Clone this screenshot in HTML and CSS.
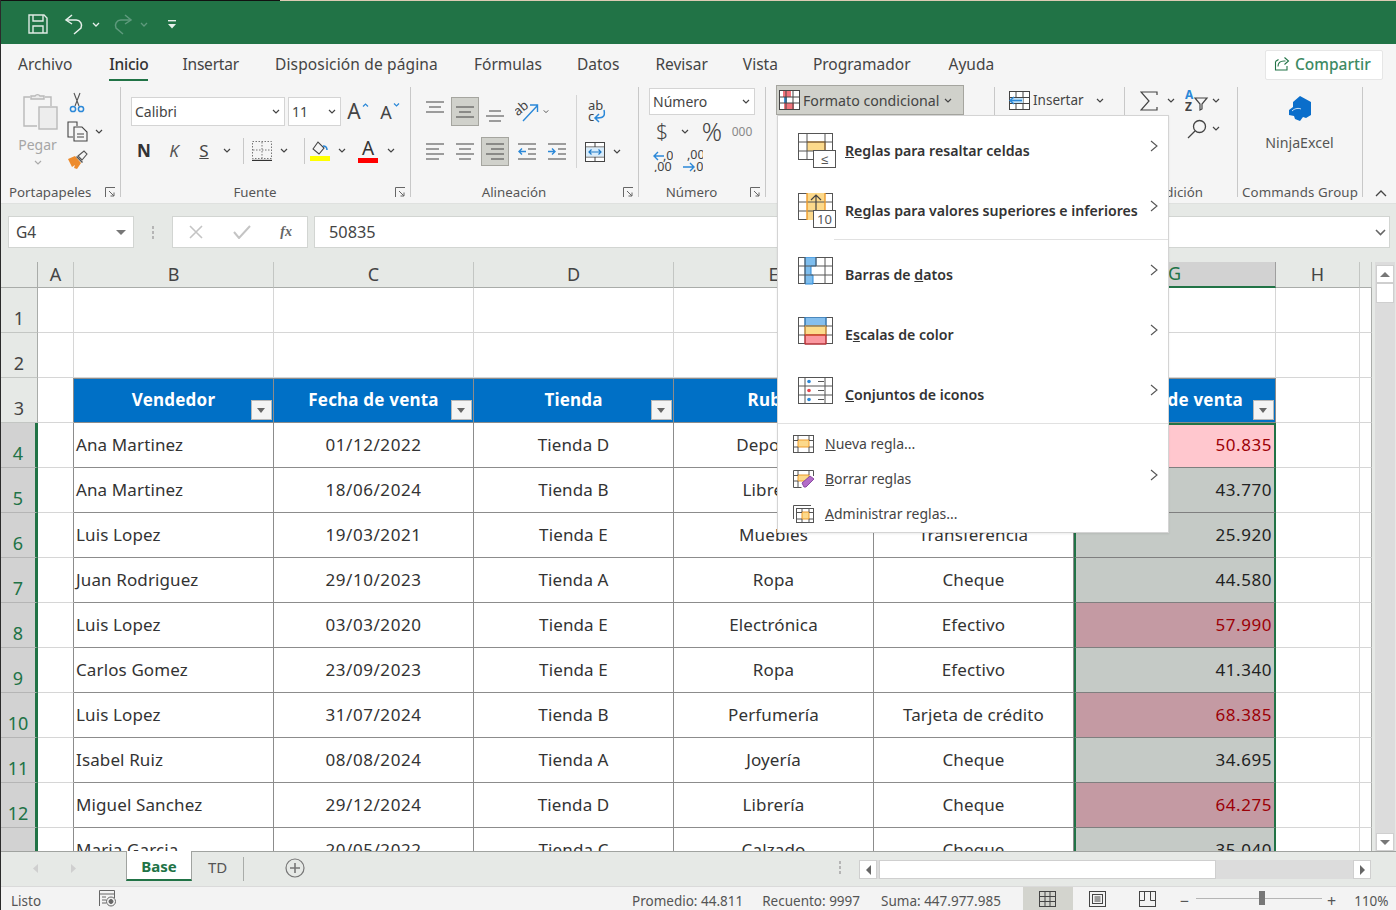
FILE: index.html
```html
<!DOCTYPE html>
<html lang="es">
<head>
<meta charset="utf-8">
<title>Excel</title>
<link rel="stylesheet" href="styles.css">
</head>
<body>
<div class="app">
  <div class="topline"></div>
  <header class="titlebar">
    <svg class="q-save" width="22" height="22" viewBox="0 0 22 22" fill="none" stroke="#dfeae4" stroke-width="1.4"><path d="M2 2h15l3 3v15H2z"/><path d="M6 2v6h10V2"/><path d="M6 20v-7h10v7"/></svg>
    <svg class="q-undo" width="22" height="22" viewBox="0 0 22 22" fill="none" stroke="#e8f0ec" stroke-width="1.5"><path d="M8 2L2 7l6 4"/><path d="M2 7h10a5.5 5.5 0 0 1 5 8l-7 6"/></svg>
    <svg class="q-caret" width="8" height="5" viewBox="0 0 8 5" fill="none" stroke="#e8f0ec" stroke-width="1.3"><path d="M1 1l3 3 3-3"/></svg>
    <svg class="q-redo" width="22" height="22" viewBox="0 0 22 22" fill="none" stroke="#5f9a7d" stroke-width="1.5"><path d="M14 2l6 5-6 4"/><path d="M20 7H10a5.5 5.5 0 0 0-5 8l7 6"/></svg>
    <svg class="q-caret q-dim" width="8" height="5" viewBox="0 0 8 5" fill="none" stroke="#5f9a7d" stroke-width="1.3"><path d="M1 1l3 3 3-3"/></svg>
    <svg class="q-more" width="10" height="9" viewBox="0 0 10 9" fill="#e8f0ec"><rect x="1" y="0" width="8" height="1.4"/><path d="M1 4h8L5 8.5z"/></svg>
  </header>

  <nav class="tabs">
    <span class="tab">Archivo</span>
    <span class="tab tab-on">Inicio</span>
    <span class="tab">Insertar</span>
    <span class="tab">Disposición de página</span>
    <span class="tab">Fórmulas</span>
    <span class="tab">Datos</span>
    <span class="tab">Revisar</span>
    <span class="tab">Vista</span>
    <span class="tab">Programador</span>
    <span class="tab">Ayuda</span>
    <button class="share">
      <svg width="16" height="15" viewBox="0 0 16 15" fill="none" stroke="#217346" stroke-width="1.1"><path d="M1.5 5.5v8.5h11.5v-4"/><path d="M4 10.5c0-4 3-5.5 6-5.5h1.5"/><path d="M10.5 1.5l4 3.5-4 3.5"/><path d="M1.5 5.5l3-2"/></svg>
      <span>Compartir</span>
    </button>
  </nav>

  <section class="ribbon">
    <div class="group g-clip">
      <div class="body clip">
        <div class="paste">
          <svg width="36" height="40" viewBox="0 0 36 40" fill="none" stroke="#b9b9b9" stroke-width="1.4"><path d="M7 5H1v29h13"/><path d="M22 5h6v9"/><path d="M8 7V4h4a3 3 0 0 1 5 0h4v3z" fill="#ececec"/><rect x="16" y="15" width="18" height="22" fill="#ededed"/></svg>
          <span class="pegar">Pegar</span>
          <svg class="caret-dim" width="8" height="5" viewBox="0 0 8 5" fill="none" stroke="#aaa" stroke-width="1.2"><path d="M1 1l3 3 3-3"/></svg>
        </div>
        <div class="clip-tools">
          <svg width="16" height="21" viewBox="0 0 16 21" fill="none"><path d="M5 1l5 13M11 1L6 14" stroke="#555" stroke-width="1.1"/><circle cx="4" cy="17" r="2.6" stroke="#2b88d8" stroke-width="1.5"/><circle cx="12" cy="17" r="2.6" stroke="#2b88d8" stroke-width="1.5"/></svg>
          <div class="row-c">
            <svg width="22" height="21" viewBox="0 0 22 21" fill="none" stroke="#444" stroke-width="1.1"><path d="M7 1H1v15h5"/><path d="M7 1h3v4"/><path d="M7 6h8l5 5v9H7z" fill="#f5f5f5"/><path d="M10 13h7M10 16h7"/></svg>
            <svg class="cr" width="8" height="5" viewBox="0 0 8 5" fill="none" stroke="#444" stroke-width="1.2"><path d="M1 1l3 3 3-3"/></svg>
          </div>
          <svg width="21" height="20" viewBox="0 0 21 20"><path d="M1 9l7-3 6 7-4 6-3-1 1-3-3 2z" fill="#ed8b2c"/><path d="M9 7l6 6 1-1-6-6z" fill="#555"/><path d="M11 6l6-5 3 3-5 6z" fill="none" stroke="#555" stroke-width="1.1"/></svg>
        </div>
      </div>
      <div class="label lab-clip"><span>Portapapeles</span><svg class="launch" width="11" height="11" viewBox="0 0 11 11" fill="none" stroke="#666"><path d="M.5 10V.5H10"/><path d="M4 4l5 5M9 5.5V9H5.5"/></svg></div>
    </div>

    <div class="group g-font">
      <div class="body font">
        <div class="row">
          <div class="combo w-font"><span>Calibri</span><svg width="8" height="5" viewBox="0 0 8 5" fill="none" stroke="#444" stroke-width="1.2"><path d="M1 1l3 3 3-3"/></svg></div>
          <div class="combo w-size"><span>11</span><svg width="8" height="5" viewBox="0 0 8 5" fill="none" stroke="#444" stroke-width="1.2"><path d="M1 1l3 3 3-3"/></svg></div>
          <div class="ic w34 grow-a"><span class="bigA">A</span><svg class="sup" width="7" height="4" viewBox="0 0 7 4" fill="none" stroke="#2b88d8" stroke-width="1.2"><path d="M1 3.5l2.5-2.5 2.5 2.5"/></svg></div>
          <div class="ic w30 grow-a"><span class="smA">A</span><svg class="sup" width="7" height="4" viewBox="0 0 7 4" fill="none" stroke="#2b88d8" stroke-width="1.2"><path d="M1 .5l2.5 2.5 2.5-2.5"/></svg></div>
        </div>
        <div class="row r2">
          <div class="ic w30 fmt fmt-b">N</div>
          <div class="ic w30 fmt fmt-i">K</div>
          <div class="ic w30 fmt fmt-u">S</div>
          <div class="ic w16"><svg width="8" height="5" viewBox="0 0 8 5" fill="none" stroke="#444" stroke-width="1.2"><path d="M1 1l3 3 3-3"/></svg></div>
          <i class="vsep"></i>
          <div class="ic w20"><svg width="20" height="20" viewBox="0 0 20 20" fill="none" stroke="#777" stroke-dasharray="1.5 1.5"><rect x=".5" y=".5" width="19" height="17"/><path d="M10 1v16M1 9h18"/><path d="M0 19.5h20" stroke="#333" stroke-width="1.4" stroke-dasharray="none"/></svg></div>
          <div class="ic w24"><svg width="8" height="5" viewBox="0 0 8 5" fill="none" stroke="#444" stroke-width="1.2"><path d="M1 1l3 3 3-3"/></svg></div>
          <i class="vsep vsep2"></i>
          <div class="ic w22"><svg width="20" height="21" viewBox="0 0 20 21" fill="none"><path d="M3 9l5-7 6 6-5 6z" stroke="#444" stroke-width="1.1"/><path d="M13 6c3 0 4 2 4 4" stroke="#2b88d8" stroke-width="1.6"/><rect y="16" width="20" height="5" fill="#ffff00"/></svg></div>
          <div class="ic w22"><svg width="8" height="5" viewBox="0 0 8 5" fill="none" stroke="#444" stroke-width="1.2"><path d="M1 1l3 3 3-3"/></svg></div>
          <div class="ic w30 col-a"><span>A</span><i></i></div>
          <div class="ic w16"><svg width="8" height="5" viewBox="0 0 8 5" fill="none" stroke="#444" stroke-width="1.2"><path d="M1 1l3 3 3-3"/></svg></div>
        </div>
      </div>
      <div class="label"><span>Fuente</span><svg class="launch" width="11" height="11" viewBox="0 0 11 11" fill="none" stroke="#666"><path d="M.5 10V.5H10"/><path d="M4 4l5 5M9 5.5V9H5.5"/></svg></div>
    </div>

    <div class="group g-align">
      <div class="body align">
        <div class="align-left">
          <div class="row">
            <div class="ic w26"><svg class="v-top" width="18" height="12" viewBox="0 0 18 12" stroke="#444" stroke-width="1.2"><path d="M0 1h18M3 6h12M0 11h18"/></svg></div>
            <div class="ic w28 on on-a"><svg width="18" height="12" viewBox="0 0 18 12" stroke="#444" stroke-width="1.2"><path d="M0 1h18M3 6h12M0 11h18"/></svg></div>
            <div class="ic w32"><svg class="v-bot" width="18" height="12" viewBox="0 0 18 12" stroke="#444" stroke-width="1.2"><path d="M3 1h12M0 6h18M3 11h12"/></svg></div>
            <div class="ic w32"><svg width="24" height="21" viewBox="0 0 24 21" fill="none"><text x="0" y="12" class="svg-ab" transform="rotate(-40 6 10)">ab</text><path d="M8 20L22 5M15 4h7.500v7" stroke="#2b88d8" stroke-width="1.4"/></svg></div>
            <div class="ic w6"><svg width="8" height="5" viewBox="0 0 8 5" fill="none" stroke="#444" stroke-width="1.2"><path d="M1 1l3 3 3-3"/></svg></div>
          </div>
          <div class="row r2a">
            <div class="ic w26"><svg width="18" height="18" viewBox="0 0 18 18" stroke="#444" stroke-width="1.2"><path d="M0 1h18M0 6h13M0 11h18M0 16h13"/></svg></div>
            <div class="ic w34"><svg width="18" height="18" viewBox="0 0 18 18" stroke="#444" stroke-width="1.2"><path d="M0 1h18M3 6h12M0 11h18M3 16h12"/></svg></div>
            <div class="ic w28 on on-b"><svg width="18" height="18" viewBox="0 0 18 18" stroke="#444" stroke-width="1.2"><path d="M0 1h18M5 6h13M0 11h18M5 16h13"/></svg></div>
            <div class="ic w36"><svg width="18" height="18" viewBox="0 0 18 18" fill="none" stroke="#444" stroke-width="1.2"><path d="M0 1h18M10 6h8M10 11h8M0 16h18"/><path d="M8 8.500H1M4 5.500l-3 3 3 3" stroke="#2b88d8" stroke-width="1.4"/></svg></div>
            <div class="ic w24"><svg width="18" height="18" viewBox="0 0 18 18" fill="none" stroke="#444" stroke-width="1.2"><path d="M0 1h18M10 6h8M10 11h8M0 16h18"/><path d="M0 8.500h7M4 5.500l3 3-3 3" stroke="#2b88d8" stroke-width="1.4"/></svg></div>
          </div>
        </div>
        <div class="align-right">
          <div class="wrap"><svg width="20" height="24" viewBox="0 0 20 24" fill="none"><text x="1" y="10" class="svg-ab2">ab</text><text x="1" y="21" class="svg-ab2">c</text><path d="M17 10c2 8-3 8-9 8M12 14l-4 4 4 4" stroke="#2b88d8" stroke-width="1.5"/></svg></div>
          <div class="row merge">
            <div class="ic w36"><svg width="20" height="20" viewBox="0 0 20 20" fill="#cfe6f8" stroke="#444"><rect x=".5" y=".5" width="19" height="19" fill="#fff"/><path d="M0 5h20M0 15h20M10 1v4M10 15v4"/><path d="M1 5.500h18v9H1z" fill="#d8ecfb" stroke="none"/><path d="M4 10h12M6.500 7.500L4 10l2.500 2.500M13.500 7.500L16 10l-2.500 2.500" fill="none" stroke="#1e7ac8" stroke-width="1.2"/></svg></div>
            <div class="ic w8"><svg width="8" height="5" viewBox="0 0 8 5" fill="none" stroke="#444" stroke-width="1.2"><path d="M1 1l3 3 3-3"/></svg></div>
          </div>
        </div>
      </div>
      <div class="label"><span>Alineación</span><svg class="launch" width="11" height="11" viewBox="0 0 11 11" fill="none" stroke="#666"><path d="M.5 10V.5H10"/><path d="M4 4l5 5M9 5.5V9H5.5"/></svg></div>
    </div>

    <div class="group g-num">
      <div class="body num">
        <div class="combo w-num"><span>Número</span><svg width="8" height="5" viewBox="0 0 8 5" fill="none" stroke="#444" stroke-width="1.2"><path d="M1 1l3 3 3-3"/></svg></div>
        <div class="row r-num">
          <div class="ic w26 dollar">$</div>
          <div class="ic w20"><svg width="8" height="5" viewBox="0 0 8 5" fill="none" stroke="#444" stroke-width="1.2"><path d="M1 1l3 3 3-3"/></svg></div>
          <div class="ic w34 pct">%</div>
          <div class="ic w26 thou">000</div>
        </div>
        <div class="row r-dec">
          <svg width="20" height="22" viewBox="0 0 20 22" fill="none"><path d="M1 6h10M5 2L1 6l4 4" stroke="#2b88d8" stroke-width="1.4"/><text x="10" y="10" class="svg-dec">,0</text><text x="1" y="21" class="svg-dec">,00</text></svg>
          <svg width="20" height="22" viewBox="0 0 20 22" fill="none"><text x="4" y="9" class="svg-dec">,00</text><path d="M0 17h10M7 13l4 4-4 4" stroke="#2b88d8" stroke-width="1.4"/><text x="10" y="21" class="svg-dec">,0</text></svg>
        </div>
      </div>
      <div class="label"><span>Número</span><svg class="launch" width="11" height="11" viewBox="0 0 11 11" fill="none" stroke="#666"><path d="M.5 10V.5H10"/><path d="M4 4l5 5M9 5.5V9H5.5"/></svg></div>
    </div>

    <div class="group g-style">
      <div class="body style">
        <button class="cf-btn">
          <svg width="21" height="20" viewBox="0 0 21 20"><rect x=".5" y=".5" width="20" height="19" fill="#fff" stroke="#444"/><rect x="4" y="1" width="8" height="6" fill="#f2737b"/><rect x="5" y="7" width="3" height="6" fill="#3a96dd"/><rect x="5" y="13" width="10" height="6" fill="#f2737b"/><path d="M0 7h21M0 13h21M7 0v20M14 0v20" stroke="#444" fill="none"/></svg>
          <span>Formato condicional</span>
          <svg width="8" height="5" viewBox="0 0 8 5" fill="none" stroke="#444" stroke-width="1.2"><path d="M1 1l3 3 3-3"/></svg>
        </button>
      </div>
      <div class="label"><span>Estilos</span></div>
    </div>

    <div class="group g-cells">
      <div class="body cells">
        <svg width="21" height="19" viewBox="0 0 21 19" fill="none"><rect x=".5" y=".5" width="20" height="18" fill="#fff" stroke="#444"/><path d="M0 6.500h21M0 12.500h21M7 0v19M14 0v19" stroke="#444"/><rect x="1" y="7" width="13" height="5" fill="#bfe0f7"/><path d="M1 9.500h12M5 6L1 9.500 5 13" stroke="#2b88d8" stroke-width="1.5"/></svg>
        <span class="ins">Insertar</span>
        <svg class="ins-c" width="8" height="5" viewBox="0 0 8 5" fill="none" stroke="#444" stroke-width="1.2"><path d="M1 1l3 3 3-3"/></svg>
      </div>
      <div class="label"><span>Celdas</span></div>
    </div>

    <div class="group g-edit">
      <div class="body edit">
        <div class="row">
          <div class="ic w20 sigma"><svg width="18" height="20" viewBox="0 0 18 20" fill="none" stroke="#444" stroke-width="1.2"><path d="M17 4V1H1l8 9-8 9h16v-3"/></svg></div>
          <div class="ic w24"><svg width="8" height="5" viewBox="0 0 8 5" fill="none" stroke="#444" stroke-width="1.2"><path d="M1 1l3 3 3-3"/></svg></div>
          <div class="ic w24 sort"><svg width="24" height="22" viewBox="0 0 24 22" fill="none"><text x="0" y="9" class="svg-az a">A</text><text x="0" y="21" class="svg-az">Z</text><path d="M10 8h12l-5 6v5l-2 1v-6z" stroke="#444" stroke-width="1.2"/></svg></div>
          <div class="ic w14"><svg width="8" height="5" viewBox="0 0 8 5" fill="none" stroke="#444" stroke-width="1.2"><path d="M1 1l3 3 3-3"/></svg></div>
        </div>
        <div class="row r-find">
          <div class="ic w28 hid-c"><svg width="8" height="5" viewBox="0 0 8 5" fill="none" stroke="#444" stroke-width="1.2"><path d="M1 1l3 3 3-3"/></svg></div>
          <div class="ic w24"><svg width="20" height="20" viewBox="0 0 20 20" fill="none" stroke="#444" stroke-width="1.3"><circle cx="12.500" cy="7.500" r="6"/><path d="M8 12L1 19"/></svg></div>
          <div class="ic w14"><svg width="8" height="5" viewBox="0 0 8 5" fill="none" stroke="#444" stroke-width="1.2"><path d="M1 1l3 3 3-3"/></svg></div>
        </div>
        <div class="row r-third">
          <div class="ic w28 hid-c"><svg width="8" height="5" viewBox="0 0 8 5" fill="none" stroke="#444" stroke-width="1.2"><path d="M1 1l3 3 3-3"/></svg></div>
        </div>
      </div>
      <div class="label lab-edit"><span>Edición</span></div>
    </div>

    <div class="group g-cmd">
      <div class="body cmd">
        <svg width="24" height="26" viewBox="0 0 24 26"><path d="M12 0l11 6v13l-5 3-3-1-3 4-5-2-1-3-5-1V14l4-3V6z" fill="#0a6ecb"/><path d="M4 15c3-3 7-3 9-2" fill="none" stroke="#fff" stroke-width=".8"/></svg>
        <span class="ninja">NinjaExcel</span>
      </div>
      <div class="label"><span>Commands Group</span></div>
    </div>
    <svg class="collapse" width="12" height="7" viewBox="0 0 12 7" fill="none" stroke="#444" stroke-width="1.3"><path d="M1 6l5-5 5 5"/></svg>
  </section>

  <section class="fbar">
    <div class="namebox"><span>G4</span><svg width="10" height="5" viewBox="0 0 10 5" fill="#777"><path d="M0 0h10L5 5z"/></svg></div>
    <div class="grip"><i></i><i></i><i></i></div>
    <div class="fbtns">
      <svg width="14" height="14" viewBox="0 0 14 14" stroke="#c4c4c4" stroke-width="1.6"><path d="M1 1l12 12M13 1L1 13"/></svg>
      <svg width="18" height="14" viewBox="0 0 18 14" fill="none" stroke="#c4c4c4" stroke-width="2"><path d="M1 7l5 6L17 1"/></svg>
      <span class="fx">fx</span>
    </div>
    <div class="finput"><span>50835</span><svg width="11" height="7" viewBox="0 0 11 7" fill="none" stroke="#666" stroke-width="1.6"><path d="M1 1l4.500 4.500L10 1"/></svg></div>
  </section>

  <section class="workspace">
    <div class="gridwrap">
      <table class="sheet">
        <colgroup><col class="c-r"><col class="c-a"><col class="c-w"><col class="c-w"><col class="c-w"><col class="c-w"><col class="c-w"><col class="c-g"><col class="c-h"><col class="c-i"></colgroup>
        <thead>
          <tr><th class="corner"></th><th>A</th><th>B</th><th>C</th><th>D</th><th>E</th><th>F</th><th class="col-sel">G</th><th>H</th><th></th></tr>
        </thead>
        <tbody>
          <tr><th class="rh">1</th><td></td><td></td><td></td><td></td><td></td><td></td><td></td><td></td><td></td></tr>
          <tr><th class="rh">2</th><td></td><td></td><td></td><td></td><td></td><td></td><td></td><td></td><td></td></tr>
          <tr class="thead"><th class="rh">3</th><td class="pre"></td>
            <td class="h">Vendedor<i class="filter"></i></td>
            <td class="h">Fecha de venta<i class="filter"></i></td>
            <td class="h">Tienda<i class="filter"></i></td>
            <td class="h">Rubro<i class="filter"></i></td>
            <td class="h">Forma de pago<i class="filter"></i></td>
            <td class="h">Monto de venta<i class="filter"></i></td>
            <td></td><td></td></tr>
          <tr><th class="rh s">4</th><td class="pre"></td><td class="t l">Ana Martinez</td><td class="t d">01/12/2022</td><td class="t">Tienda D</td><td class="t">Deportes</td><td class="t">Efectivo</td><td class="g active">50.835</td><td></td><td></td></tr>
          <tr><th class="rh s">5</th><td class="pre"></td><td class="t l">Ana Martinez</td><td class="t d">18/06/2024</td><td class="t">Tienda B</td><td class="t">Librería</td><td class="t">Cheque</td><td class="g">43.770</td><td></td><td></td></tr>
          <tr><th class="rh s">6</th><td class="pre"></td><td class="t l">Luis Lopez</td><td class="t d">19/03/2021</td><td class="t">Tienda E</td><td class="t">Muebles</td><td class="t">Transferencia</td><td class="g">25.920</td><td></td><td></td></tr>
          <tr><th class="rh s">7</th><td class="pre"></td><td class="t l">Juan Rodriguez</td><td class="t d">29/10/2023</td><td class="t">Tienda A</td><td class="t">Ropa</td><td class="t">Cheque</td><td class="g">44.580</td><td></td><td></td></tr>
          <tr><th class="rh s">8</th><td class="pre"></td><td class="t l">Luis Lopez</td><td class="t d">03/03/2020</td><td class="t">Tienda E</td><td class="t">Electrónica</td><td class="t">Efectivo</td><td class="g hot">57.990</td><td></td><td></td></tr>
          <tr><th class="rh s">9</th><td class="pre"></td><td class="t l">Carlos Gomez</td><td class="t d">23/09/2023</td><td class="t">Tienda E</td><td class="t">Ropa</td><td class="t">Efectivo</td><td class="g">41.340</td><td></td><td></td></tr>
          <tr><th class="rh s">10</th><td class="pre"></td><td class="t l">Luis Lopez</td><td class="t d">31/07/2024</td><td class="t">Tienda B</td><td class="t">Perfumería</td><td class="t">Tarjeta de crédito</td><td class="g hot">68.385</td><td></td><td></td></tr>
          <tr><th class="rh s">11</th><td class="pre"></td><td class="t l">Isabel Ruiz</td><td class="t d">08/08/2024</td><td class="t">Tienda A</td><td class="t">Joyería</td><td class="t">Cheque</td><td class="g">34.695</td><td></td><td></td></tr>
          <tr><th class="rh s">12</th><td class="pre"></td><td class="t l">Miguel Sanchez</td><td class="t d">29/12/2024</td><td class="t">Tienda D</td><td class="t">Librería</td><td class="t">Cheque</td><td class="g hot">64.275</td><td></td><td></td></tr>
          <tr><th class="rh s">13</th><td class="pre"></td><td class="t l">Maria Garcia</td><td class="t d">20/05/2022</td><td class="t">Tienda C</td><td class="t">Calzado</td><td class="t">Cheque</td><td class="g">35.040</td><td></td><td></td></tr>
        </tbody>
      </table>
    </div>
    <div class="vscroll">
      <div class="sbtn"><svg width="10" height="5" viewBox="0 0 10 5" fill="#777"><path d="M0 5h10L5 0z"/></svg></div>
      <div class="vthumb"></div>
      <div class="sbtn vdown"><svg width="10" height="5" viewBox="0 0 10 5" fill="#777"><path d="M0 0h10L5 5z"/></svg></div>
    </div>
  </section>

  <section class="sheetbar">
    <svg class="nav" width="5" height="9" viewBox="0 0 5 9" fill="#cfcfcf"><path d="M5 0v9L0 4.500z"/></svg>
    <svg class="nav nav2" width="5" height="9" viewBox="0 0 5 9" fill="#cfcfcf"><path d="M0 0v9l5-4.500z"/></svg>
    <div class="stab">Base</div>
    <div class="stab2">TD</div>
    <i class="tsep"></i>
    <svg class="add" width="20" height="20" viewBox="0 0 20 20" fill="none" stroke="#777" stroke-width="1.2"><circle cx="10" cy="10" r="9"/><path d="M10 5v10M5 10h10" stroke-width="1.6"/></svg>
    <div class="grip grip2"><i></i><i></i><i></i></div>
    <div class="hscroll">
      <div class="sbtn hb"><svg width="5" height="10" viewBox="0 0 5 10" fill="#666"><path d="M5 0v10L0 5z"/></svg></div>
      <div class="hthumb"></div>
      <div class="sbtn hb"><svg width="5" height="10" viewBox="0 0 5 10" fill="#666"><path d="M0 0v10l5-5z"/></svg></div>
    </div>
  </section>

  <footer class="status">
    <span class="listo">Listo</span>
    <svg class="macro" width="18" height="17" viewBox="0 0 18 17" fill="none" stroke="#666"><path d="M.5 16V.5h15V8"/><path d="M1 4h14M3 7h4M3 10h4M3 13h4"/><circle cx="12" cy="11.500" r="4.500" fill="#f2f2f2"/><circle cx="12" cy="11.500" r="2" fill="#666"/></svg>
    <span class="stat s1">Promedio: 44.811</span>
    <span class="stat s2">Recuento: 9997</span>
    <span class="stat s3">Suma: 447.977.985</span>
    <div class="view view-on"><svg width="17" height="16" viewBox="0 0 17 16" fill="none" stroke="#444"><rect x=".5" y=".5" width="16" height="15"/><path d="M6 0v16M11 0v16M0 5.500h17M0 10.500h17"/></svg></div>
    <div class="view"><svg width="17" height="16" viewBox="0 0 17 16" fill="none" stroke="#444"><rect x=".5" y=".5" width="16" height="15"/><rect x="3.500" y="3.500" width="10" height="9"/><path d="M5.500 6h6M5.500 8h6M5.500 10h6"/></svg></div>
    <div class="view"><svg width="17" height="16" viewBox="0 0 17 16" fill="none" stroke="#444"><rect x=".5" y=".5" width="16" height="15"/><path d="M.5 9.500h5V.5M11.500.5v9h5"/></svg></div>
    <span class="zm">−</span>
    <div class="slider"><i></i></div>
    <span class="zm zp">+</span>
    <span class="pctz">110%</span>
  </footer>

  <div class="menu">
    <div class="mi big">
      <svg width="38" height="35" viewBox="0 0 38 35" fill="none" stroke="#555"><rect x=".5" y=".5" width="34" height="26" fill="#fff"/><rect x="9" y="9" width="18" height="9" fill="#fcd98b" stroke="none"/><path d="M9 9h18v9" stroke="#ed9b2c" stroke-width="1.4"/><path d="M0 9h35M0 18h35M9 0v27M27 0v27"/><rect x="15.500" y="17.500" width="22" height="17" fill="#fff"/><text x="26.500" y="31" class="svg-mi">≤</text></svg>
      <span class="mt"><u>R</u>eglas para resaltar celdas</span>
      <svg class="chev" width="8" height="12" viewBox="0 0 8 12" fill="none" stroke="#555" stroke-width="1.1"><path d="M1 1l6 5-6 5"/></svg>
    </div>
    <div class="mi big">
      <svg width="38" height="35" viewBox="0 0 38 35" fill="none" stroke="#555"><rect x=".5" y=".5" width="34" height="26" fill="#fff"/><rect x="9" y="0" width="18" height="27" fill="#fcd98b" stroke="none"/><path d="M0 9h35M0 18h35"/><path d="M9 0v27M27 0v27" stroke="#ed9b2c" stroke-width="1.4"/><path d="M18 17V2M13 7l5-5 5 5" stroke="#444" stroke-width="1.2"/><rect x="15.500" y="17.500" width="22" height="17" fill="#fff"/><text x="26.500" y="31" class="svg-mi">10</text></svg>
      <span class="mt">R<u>e</u>glas para valores superiores e inferiores</span>
      <svg class="chev" width="8" height="12" viewBox="0 0 8 12" fill="none" stroke="#555" stroke-width="1.1"><path d="M1 1l6 5-6 5"/></svg>
    </div>
    <div class="msep msep-a"></div>
    <div class="mi big">
      <svg width="38" height="35" viewBox="0 0 38 35" fill="none" stroke="#555"><rect x=".5" y=".5" width="34" height="26" fill="#fff"/><path d="M7 0h11v9h-5v9h2v9H7z" fill="#7dbdee" stroke="#2b88d8"/><path d="M0 9h35M0 18h35M7 0v27M27 0v27"/><path d="M18 0v9" /></svg>
      <span class="mt">Barras de <u>d</u>atos</span>
      <svg class="chev" width="8" height="12" viewBox="0 0 8 12" fill="none" stroke="#555" stroke-width="1.1"><path d="M1 1l6 5-6 5"/></svg>
    </div>
    <div class="mi big">
      <svg width="38" height="35" viewBox="0 0 38 35" fill="none" stroke="#555"><rect x=".5" y=".5" width="34" height="26" fill="#fff"/><rect x="7" y="0" width="21" height="9" fill="#85bfee"/><rect x="7" y="9" width="21" height="9" fill="#fddc8c"/><rect x="7" y="18" width="21" height="9" fill="#fb98a0"/><path d="M7 0h21v9H7z" stroke="#2b88d8"/><path d="M7 9h21v9H7z" stroke="#ed9b2c"/><path d="M7 18h21v9H7z" stroke="#e0242c"/><path d="M0 9h7M28 9h7M0 18h7M28 18h7"/></svg>
      <span class="mt">E<u>s</u>calas de color</span>
      <svg class="chev" width="8" height="12" viewBox="0 0 8 12" fill="none" stroke="#555" stroke-width="1.1"><path d="M1 1l6 5-6 5"/></svg>
    </div>
    <div class="mi big">
      <svg width="38" height="35" viewBox="0 0 38 35" fill="none" stroke="#555"><rect x=".5" y=".5" width="34" height="26" fill="#fff"/><path d="M0 9h35M0 18h35M7 0v27M27 0v27"/><path d="M20 4.500h6M20 13.500h6M20 22.500h6"/><circle cx="11" cy="4.500" r="1.800" fill="#2b88d8" stroke="none"/><circle cx="11" cy="13.500" r="1.800" fill="#e8434a" stroke="none"/><circle cx="11" cy="22.500" r="1.800" fill="#2b88d8" stroke="none"/></svg>
      <span class="mt"><u>C</u>onjuntos de iconos</span>
      <svg class="chev" width="8" height="12" viewBox="0 0 8 12" fill="none" stroke="#555" stroke-width="1.1"><path d="M1 1l6 5-6 5"/></svg>
    </div>
    <div class="msep msep-b"></div>
    <div class="mi small">
      <svg width="21" height="18" viewBox="0 0 21 18" fill="none" stroke="#555"><rect x=".5" y=".5" width="20" height="17" fill="#fff"/><rect x="5" y="5" width="11" height="7" fill="#fcd98b" stroke="#ed9b2c"/><path d="M0 5.500h5M16 5.500h5M0 12h5M16 12h5M5 0v5M16 0v5M5 12v6M16 12v6"/></svg>
      <span class="ms"><u>N</u>ueva regla...</span>
    </div>
    <div class="mi small">
      <svg width="21" height="18" viewBox="0 0 21 18" fill="none" stroke="#555"><path d="M20.500 6V.5H.5v17h8"/><rect x="5" y="5" width="11" height="6" fill="#fcd98b" stroke="#ed9b2c"/><path d="M0 5.500h5M0 11h5M5 0v5M16 0v5M5 11v6"/><path d="M9 13l8-7 4 3-8 8h-2z" fill="#b36cc8" stroke="#8a4ba3"/></svg>
      <span class="ms"><u>B</u>orrar reglas</span>
      <svg class="chev" width="8" height="12" viewBox="0 0 8 12" fill="none" stroke="#555" stroke-width="1.1"><path d="M1 1l6 5-6 5"/></svg>
    </div>
    <div class="mi small">
      <svg width="21" height="18" viewBox="0 0 21 18" fill="none" stroke="#555"><path d="M.5 14V.5H18"/><rect x="3.500" y="3.500" width="17" height="14" fill="#fff"/><rect x="9" y="7" width="7" height="7" fill="#fcd98b" stroke="#ed9b2c"/><path d="M4 7.500h5M16 7.500h5M4 14h5M16 14h5M9 4v3M16 4v3M9 14v4M16 14v4"/></svg>
      <span class="ms"><u>A</u>dministrar reglas...</span>
    </div>
  </div>
</div>
</body>
</html>
```
FILE: styles.css
```css
* { box-sizing: border-box; }
html, body { margin: 0; padding: 0; }
body { width: 1396px; height: 910px; overflow: hidden; font-family: "Noto Sans", "Open Sans", sans-serif; color: #444; background: #fff; }
.app { position: relative; width: 1396px; height: 910px; border-left: 1px solid #2b2b2b; display: flex; flex-direction: column; overflow: hidden; }
i { display: block; }
button { font: inherit; padding: 0; }

.topline { height: 1px; flex: none; background: linear-gradient(to right, #111 279px, #dccbb4 279px); }

.titlebar { height: 43px; flex: none; background: #217346; display: flex; align-items: center; padding: 3px 0 0 26px; }
.q-undo { margin-left: 15px; }
.q-caret { margin-left: 6px; }
.q-redo { margin-left: 11px; }
.q-more { margin-left: 19px; }
.q-dim { margin-left: 7px; }

.tabs { height: 41px; flex: none; background: #f5f5f5; display: flex; align-items: center; padding-left: 17px; gap: 36px; position: relative; font-size: 15.500px; }
.tab { color: #444; line-height: 39px; height: 39px; white-space: nowrap; }
.tab:nth-child(2) { margin-left: 1px; margin-right: -2px; letter-spacing: -.25px; }
.tab:nth-child(3) { margin-right: -1px; letter-spacing: -.2px; }
.tab:nth-child(4) { letter-spacing: .15px; margin-left: 1px; }
.tab:nth-child(5) { margin-right: -1px; }
.tab:nth-child(7) { margin-right: -1px; }
.tab:nth-child(8) { margin-right: -1px; }
.tab:nth-child(9) { margin-right: 2px; }
.tab-on { color: #333; box-shadow: inset 0 -3px 0 #f5f5f5, inset 0 -5px 0 #217346; height: 39px; font-weight: 500; }
.share { margin-left: auto; margin-right: 13px; width: 118px; height: 30px; background: #fff; border: 1px solid #e6e6e6; border-radius: 2px; display: flex; align-items: center; padding: 0 0 2px 8px; gap: 5px; font-size: 15.500px; font-weight: 500; color: #3d8a63; }

.ribbon { height: 119px; flex: none; background: #f5f5f5; display: flex; padding: 2px 0 6px; border-bottom: 1px solid #dfe1df; position: relative; }
.group { display: flex; flex-direction: column; border-right: 1px solid #c8c8c8; flex: none; }
.g-clip { width: 120px; }
.g-font { width: 290px; }
.g-align { width: 228px; }
.g-num { width: 127px; }
.g-style { width: 229px; }
.g-cells { width: 130px; }
.g-edit { width: 113px; }
.g-cmd { width: 125px; }
.body { flex: 1; min-height: 0; }
.label { height: 12px; padding-top: 2px; display: flex; align-items: center; font-size: 13.300px; color: #555; padding-right: 4px; white-space: nowrap; }
.label span { flex: 1; text-align: center; padding-right: 6px; }
.launch { flex: none; }
.lab-clip span { text-align: left; padding-left: 8px; }
.lab-edit span { padding: 0; margin-left: 3px; }
.g-cmd .label { padding-right: 0; }
.g-cmd .label span { padding: 0; letter-spacing: .12px; }

.row { display: flex; align-items: center; height: 29px; }
.row-c { display: flex; align-items: center; margin-left: -1px; }
.ic { display: flex; align-items: center; justify-content: center; flex: none; height: 29px; position: relative; }
.w6 { width: 6px; } .w8 { width: 8px; } .w12 { width: 12px; } .w14 { width: 14px; } .w16 { width: 16px; } .w20 { width: 20px; }
.w22 { width: 22px; } .w24 { width: 24px; } .w26 { width: 26px; } .w28 { width: 28px; } .w30 { width: 30px; }
.w32 { width: 32px; } .w34 { width: 34px; } .w36 { width: 36px; }
.vsep { width: 1px; height: 26px; background: #c8c8c8; flex: none; }

.clip { display: flex; padding: 5px 0 0 22px; }
.paste { width: 36px; display: flex; flex-direction: column; align-items: center; }
.pegar { font-size: 14px; color: #a6a6a6; margin: 3px 7px 0 0; line-height: 20px; }
.caret-dim { margin: 5px 7px 0 0; }
.clip-tools { display: flex; flex-direction: column; margin-left: 9px; gap: 8px; }
.clip-tools > svg:first-child { margin-left: 1px; }
.clip-tools > svg:last-child { margin-left: -1px; }
.cr { margin-left: 6px; }

.font { padding: 10px 0 0 10px; }
.combo { height: 29px; background: #fff; border: 1px solid #d4d4d4; display: flex; align-items: center; justify-content: space-between; padding: 0 4px 0 3px; font-size: 14px; color: #444; flex: none; }
.w-font { width: 154px; }
.w-size { width: 53px; margin-left: 3px; }
.w-num { width: 106px; height: 27px; }
.grow-a { color: #444; }
.bigA { font-size: 21px; line-height: 1; }
.smA { font-size: 18px; line-height: 1; }
.sup { margin-left: 1px; margin-bottom: 14px; }
.r2 { margin-top: 10px; margin-left: -2px; }
.r2 .vsep { margin: 0 8px; }
.r2 .vsep2 { margin: 0 4px 0 8px; }
.fmt { font-size: 17px; color: #444; }
.fmt-b { font-weight: 700; color: #333; }
.fmt-i { font-style: italic; color: #555; }
.fmt-u { text-decoration: underline; }
.col-a { flex-direction: column; font-size: 19px; color: #333; line-height: 1; }
.col-a span { margin-top: 1px; line-height: 18px; }
.col-a i { width: 20px; height: 5px; background: #f00; margin-top: 1px; }

.align { display: flex; padding: 10px 0 0 11px; }
.align-left { width: 155px; height: 73px; border-right: 1px solid #d4d4d4; margin-top: -2px; padding-top: 2px; }
.r2a { margin-top: 11px; }
.on { background: #d0d1cb; border: 1px solid #a5a59f; }
.on-a { margin-left: 3px; }
.on-b { margin-left: -1px; }
.v-top { margin-bottom: 10px; }
.v-bot { margin-top: 8px; }
.svg-ab { font: 13px "Noto Sans", sans-serif; fill: #444; }
.svg-ab2 { font: 13px "Noto Sans", sans-serif; fill: #444; }
.wrap { width: 40px; display: flex; justify-content: center; padding-top: 3px; height: 29px; }
.merge { margin-top: 11px; }
.svg-dec { font: 12.500px "Noto Sans", sans-serif; fill: #444; }

.num { padding: 1px 0 0 10px; }
.r-num { height: 24px; margin-top: 4px; }
.r-num .ic { height: 24px; }
.dollar { font-size: 21px; color: #444; font-weight: 300; }
.pct { font-size: 25px; color: #444; font-weight: 300; }
.thou { font-size: 12px; color: #888; }
.r-dec { height: 22px; margin: 7px 0 0 4px; gap: 10px; }

.style { padding-left: 10px; margin-top: -2px; }
.cf-btn { width: 188px; height: 30px; background: #d0d1cb; border: 1px solid #a5a59f; display: flex; align-items: center; padding: 0 2px; gap: 3px; color: #444; font-size: 14.200px; }
.cf-btn span + svg { margin-left: 2px; }

.cells { display: flex; align-items: center; height: 26px; flex: none; padding-left: 14px; }
.g-cells .label { margin-top: auto; }
.ins { font-size: 13.500px; margin-left: 3px; }
.ins-c { margin-left: 12px; }

.edit { padding: 2px 0 0 14px; }
.edit .row { height: 23px; }
.edit .ic { height: 23px; }
.sort { margin-left: 2px; }
.svg-az { font: 700 12px "Noto Sans", sans-serif; fill: #444; }
.svg-az.a { fill: #2b88d8; }
.r-find { margin-top: 5px; margin-left: 10px; }
.r-third { margin-top: 6px; margin-left: 10px; }
.hid-c { justify-content: flex-start; }
.r-find .w24 { margin-left: 8px; }

.cmd { display: flex; flex-direction: column; align-items: center; padding: 9px 1px 0 0; }
.ninja { font-size: 14.200px; margin-top: 11px; color: #555; }

.collapse { position: absolute; left: 1374px; top: 105px; }

.fbar { height: 58px; flex: none; background: #e6e9e6; display: flex; align-items: flex-start; padding: 12px 6px 0 7px; }
.namebox { width: 126px; height: 32px; background: #fff; border: 1px solid #d2d5d2; display: flex; align-items: center; justify-content: space-between; padding: 0 7px 0 7px; font-size: 15.500px; color: #444; }
.grip { width: 38px; height: 32px; display: flex; flex-direction: column; align-items: center; justify-content: center; gap: 2px; }
.grip i { width: 2px; height: 3px; background: #b5b5b5; }
.fbtns { width: 136px; height: 32px; background: #fff; border: 1px solid #d2d5d2; display: flex; align-items: center; justify-content: space-between; padding: 0 15px 0 16px; }
.fx { font: italic 700 14px "Liberation Serif", serif; color: #666; }
.finput { margin-left: 6px; flex: 1; height: 32px; background: #fff; border: 1px solid #d2d5d2; display: flex; align-items: center; justify-content: space-between; padding: 0 3px 0 14px; font-size: 16.300px; color: #444; }

.workspace { height: 589px; flex: none; display: flex; background: #e6e9e6; }
.gridwrap { width: 1371px; height: 589px; overflow: hidden; flex: none; }
.sheet { border-collapse: separate; border-spacing: 0; table-layout: fixed; width: 1371px; font-size: 17px; letter-spacing: .12px; color: #333; }
.c-r { width: 37px; } .c-a { width: 36px; } .c-w { width: 200px; } .c-g { width: 202px; } .c-h { width: 84px; } .c-i { width: 12px; }
.sheet thead tr { height: 25px; }
.sheet tbody tr { height: 45px; }
.sheet thead th { background: #e6e9e6; font-weight: 400; font-size: 18px; letter-spacing: 0; color: #444; padding: 0 0 2px; border-right: 1px solid #c3c6c3; border-bottom: 1px solid #a9aca9; line-height: 22px; overflow: hidden; }
.sheet thead th.col-sel { background: #d2d2d2; color: #217346; border-bottom: 2px solid #217346; border-right: 1px solid #9f9f9f; }
.corner { border-right-color: #a9aca9 !important; }
.rh { background: #e6e9e6; font-weight: 400; font-size: 18px; letter-spacing: 0; color: #444; border-bottom: 1px solid #c3c6c3; border-right: 1px solid #a9aca9; vertical-align: bottom; padding: 0 0 2px; line-height: 24px; }
.rh.s { background: #d2d2d2; color: #217346; border-right: 3px solid #217346; border-bottom-color: #b5b5b5; }
td { padding: 0 2px 2px 2px; border-right: 1px solid #d6d6d6; border-bottom: 1px solid #d6d6d6; background: #fff; text-align: center; white-space: nowrap; overflow: hidden; }
td:last-child { border-right-color: #a9aca9; }
td.pre { border-right-color: #8c8c8c; }
td.t { border-right-color: #8c8c8c; border-bottom-color: #8c8c8c; }
td.l { text-align: left; }
td.d { letter-spacing: .55px; }
td.h { background: #0070c6; color: #fff; font-weight: 700; border-right-color: #8c8c8c; border-bottom-color: #8c8c8c; position: relative; font-size: 17px; letter-spacing: .2px; padding-bottom: 2px; overflow: visible; border-top: 1px solid #8c8c8c; }
.filter { position: absolute; right: 1px; bottom: 2px; width: 21px; height: 20px; background: #f4f4f4; border: 1px solid #b8b8b8; }
.filter::after { content: ""; position: absolute; left: 5px; top: 7px; border: 4.500px solid transparent; border-top: 5px solid #666; border-bottom: 0; }
td.g { background: #c5cac6; text-align: right; letter-spacing: .55px; border-left: 2px solid #217346; border-right: 2px solid #217346; border-bottom-color: #7f7f7f; color: #222; }
td.g.hot { background: #c49aa3; color: #9c0006; }
td.g.active { background: #ffc7ce; color: #9c0006; border-top: 2px solid #217346; padding-bottom: 4px; }

.vscroll { width: 20px; margin-left: 3px; background: #dcdcdc; display: flex; flex-direction: column; align-items: center; padding-top: 3px; position: relative; }
.sbtn { background: #fff; border: 1px solid #cfcfcf; display: flex; align-items: center; justify-content: center; width: 18px; height: 18px; flex: none; }
.vthumb { width: 18px; height: 20px; background: #fff; border: 1px solid #cfcfcf; }
.vdown { margin-top: auto; }

.sheetbar { height: 35px; flex: none; background: #e6e9e6; border-top: 1px solid #a0a3a0; display: flex; align-items: flex-start; position: relative; }
.nav { margin: 12px 0 0 32px; }
.nav2 { margin-left: 33px; }
.stab { margin-left: 50px; width: 66px; height: 30px; background: #fff; border: 1px solid #a0a3a0; border-top: 0; border-bottom: 2px solid #217346; color: #217346; font-weight: 700; font-size: 15px; text-align: center; padding-top: 2px; line-height: 27px; margin-top: -1px; }
.stab2 { margin-left: 16px; font-size: 15px; line-height: 31px; color: #555; }
.tsep { width: 1px; height: 24px; background: #a9aca9; margin: 5px 0 0 16px; }
.add { margin: 6px 0 0 41px; }
.grip2 { margin: 0 0 0 525px; width: 20px; height: 30px; }
.hscroll { margin: 8px 0 0 9px; width: 512px; height: 19px; background: #dcdcdc; display: flex; }
.hb { height: 19px; }
.hthumb { width: 337px; height: 19px; margin-left: 2px; background: #fff; border: 1px solid #cfcfcf; margin-right: auto; }

.status { height: 24px; flex: none; background: #f3f3f3; border-top: 1px solid #dadada; display: flex; align-items: center; font-size: 13.500px; color: #555; padding-left: 10px; }
.status > * { flex: none; }
.status > span { margin-top: 4px; }
.listo { width: 88px; }
.stat { white-space: nowrap; }
.s1 { margin-left: 515px; }
.s2 { margin-left: 19px; }
.s3 { margin-left: 21px; }
.view { width: 50px; height: 23px; display: flex; align-items: center; justify-content: center; }
.view-on { background: #d3d4ce; margin-left: 22px; }
.zm { margin-left: 7px; font-size: 16px; }
.zp { margin-left: 5px; }
.slider { width: 126px; height: 1px; background: #b5b5b5; margin-left: 7px; position: relative; }
.slider i { position: absolute; left: 63px; top: -7px; width: 6px; height: 14px; background: #777; }
.pctz { margin-left: 18px; }

.menu { position: absolute; left: 776px; top: 115px; width: 392px; height: 418px; background: #fff; border: 1px solid #d4d4d4; padding-top: 4px; z-index: 5; box-shadow: 0 1px 2px rgba(0,0,0,.08); }
.mi { display: flex; align-items: center; position: relative; }
.big { height: 60px; padding-left: 20px; }
.big svg:first-child { flex: none; }
.small { height: 35px; padding-left: 15px; }
.mt { margin-left: 9px; font-size: 14.150px; font-weight: 600; color: #333; white-space: nowrap; }
.ms { margin-left: 11px; font-size: 14px; color: #444; white-space: nowrap; }
.chev { position: absolute; right: 10px; top: 50%; margin-top: -10px; }
.msep { height: 1px; background: #e1e1e1; }
.msep-a { margin: -1px 0 4px 56px; }
.msep-b { margin: -1px 0 2px 0; }
.svg-mi { font: 13px "Noto Sans", sans-serif; fill: #555; stroke: none; text-anchor: middle; }
```
